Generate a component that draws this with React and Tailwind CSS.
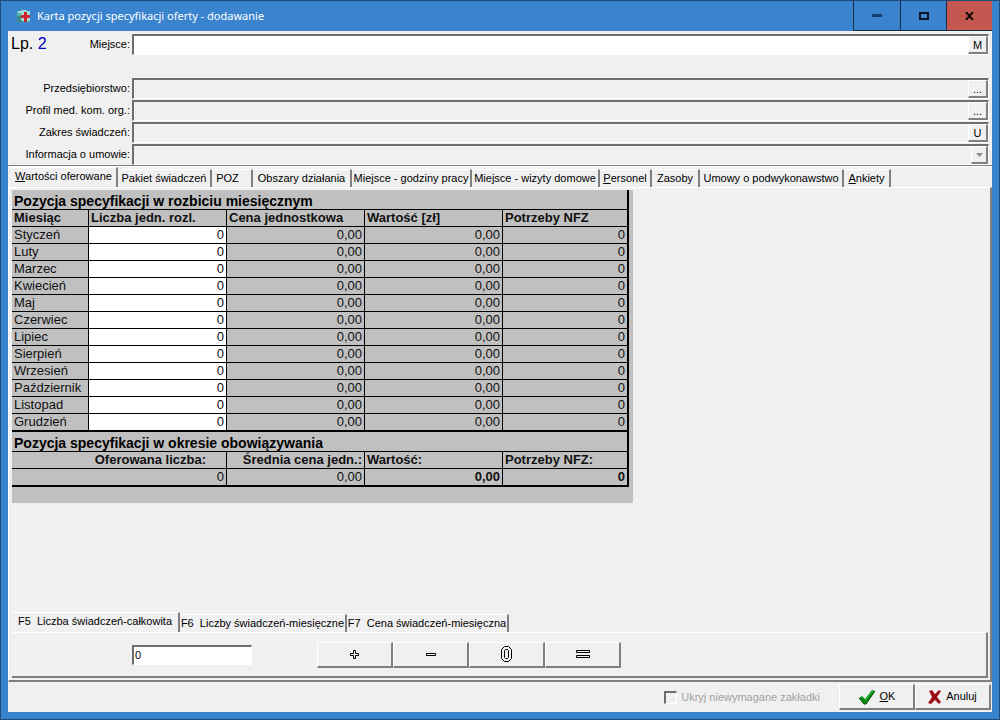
import { useState } from 'react';
import { clsx } from 'clsx';

const months = [
  'Styczeń',
  'Luty',
  'Marzec',
  'Kwiecień',
  'Maj',
  'Czerwiec',
  'Lipiec',
  'Sierpień',
  'Wrzesień',
  'Październik',
  'Listopad',
  'Grudzień',
];

const fields = [
  { id: 'company', label: 'Przedsiębiorstwo:', button: '...' },
  { id: 'profile', label: 'Profil med. kom. org.:', button: '...' },
  { id: 'scope', label: 'Zakres świadczeń:', button: 'U' },
];

const mainTabs = [
  { hotkey: 'W', label: 'artości oferowane', width: 'w-[107px]' },
  { label: 'Pakiet świadczeń', width: 'w-[94px]' },
  { label: 'POZ', width: 'w-[41px] pr-2' },
  { label: 'Obszary działania', width: 'w-[99px]' },
  { label: 'Miejsce - godziny pracy', width: 'w-[120px]' },
  { label: 'Miejsce - wizyty domowe', width: 'w-[128px]' },
  { hotkey: 'P', label: 'ersonel', width: 'w-[52px]' },
  { label: 'Zasoby', width: 'w-[48px]' },
  { label: 'Umowy o podwykonawstwo', width: 'w-[144px]' },
  { hotkey: 'A', label: 'nkiety', width: 'w-[47px]' },
];

const entryTabs = [
  { label: 'F5  Liczba świadczeń-całkowita', width: 'w-[168px]' },
  { label: 'F6  Liczby świadczeń-miesięczne', width: 'w-[167px]' },
  { label: 'F7  Cena świadczeń-miesięczna', width: 'w-[162px]' },
];

const raised = 'border-t border-l border-t-white border-l-white border-r-2 border-b-2 border-r-[#808080] border-b-[#808080] bg-[#f0f0f0]';
const sunken = 'border-t-2 border-l-2 border-t-[#6e6e6e] border-l-[#6e6e6e] border-r border-b border-r-white border-b-white';
const cell = 'h-[17px] border-b border-r border-black px-[2px] leading-4';
const sectionCell = 'h-5 border-r border-b border-black px-[2px] pt-[3px] text-left text-sm leading-4 text-black';

const Tabs = ({ tabs, active, onSelect }) => (
  <div role="tablist" className="flex items-end">
    {tabs.map((tab, i) => (
      <button
        key={tab.label}
        type="button"
        role="tab"
        aria-selected={i === active}
        onClick={() => onSelect(i)}
        className={clsx(
          'shrink-0 whitespace-pre border-t border-r-2 border-t-white border-r-[#808080] text-center',
          tab.width,
          i === active ? 'h-5 pb-1' : 'h-[18px]'
        )}
      >
        {tab.hotkey && <u>{tab.hotkey}</u>}
        {tab.label}
      </button>
    ))}
  </div>
);

const AppIcon = () => (
  <svg width="16" height="16" viewBox="0 0 16 16" aria-hidden="true">
    <path d="M1 3h3l1-1h5l1 1h3v11H1z" fill="#4fb0ae" />
    <path d="M2 3h3l1-1h4l1 1h3v2H2z" fill="#9adbd6" />
    <path d="M1 8h5v6H1z" fill="#3c8a8c" />
    <rect x="5" y="4" width="9" height="9" rx="2" fill="#a5ddd8" />
    <path d="M8 4h3v3h3v3h-3v4H8v-4H5V7h3z" fill="#d0232f" />
  </svg>
);

const CheckIcon = () => (
  <svg width="18" height="16" viewBox="0 0 18 16" aria-hidden="true">
    <path d="M1 9l3-2 3 3 7-9 3 1-9 13H6z" fill="#0a8a12" />
    <path d="M1 9l5 6h2l9-13" fill="none" stroke="#054b09" />
    <path d="M7 11l8-9" stroke="#35c43a" />
  </svg>
);

const CrossIcon = () => (
  <svg width="14" height="16" viewBox="0 0 14 16" aria-hidden="true">
    <path d="M1 2l3-1 3 4 4-4 2 1-4 6 4 5-2 2-4-4-4 4-3-1 4-6z" fill="#a8101b" />
    <path d="M3 2l8 11M11 3l-8 10" stroke="#7c0710" />
  </svg>
);

const TitleBar = () => (
  <header className="flex h-[30px] items-stretch pr-[7px] pl-[15px]">
    <div className="flex flex-1 items-center gap-[5px]">
      <AppIcon />
      <h1 className="font-['Noto_Sans',sans-serif] text-[11px] whitespace-nowrap text-white">
        Karta pozycji specyfikacji oferty - dodawanie
      </h1>
    </div>
    <button type="button" aria-label="Minimalizuj" className="flex w-[47px] items-center justify-center border-b border-l border-[#1d2c40]">
      <svg width="10" height="3" aria-hidden="true">
        <rect width="10" height="3" fill="#163f70" />
      </svg>
    </button>
    <button type="button" aria-label="Maksymalizuj" className="flex w-[46px] items-center justify-center border-b border-l border-[#1d2c40]">
      <svg width="10" height="8" aria-hidden="true">
        <rect x="1" y="1" width="8" height="6" fill="none" stroke="#0b1420" strokeWidth="2" />
      </svg>
    </button>
    <button type="button" aria-label="Zamknij" className="flex w-[46px] items-center justify-center border-b border-l border-[#1d2c40] bg-[#c4574f]">
      <svg width="10" height="8" viewBox="0 0 10 8" aria-hidden="true">
        <path d="M1 0l7 8M8 0L1 8" stroke="#100a0a" strokeWidth="2" />
      </svg>
    </button>
  </header>
);

const OfferForm = () => (
  <section className="flex flex-col gap-px px-[3px] pt-[3px]">
    <div className="mb-[22px] flex h-[21px]">
      <div className="flex-none text-base leading-5 text-black">
        Lp. <span className="text-[#0000c0]">2</span>
      </div>
      <label htmlFor="place" className="flex-1 pr-[2px] text-right leading-[21px]">
        Miejsce:
      </label>
      <div className={clsx('flex w-[857px] flex-none bg-white', sunken)}>
        <input id="place" className="min-w-0 flex-1 px-1 outline-none" />
        <button type="button" className={clsx('w-5', raised)}>
          M
        </button>
      </div>
    </div>
    {fields.map((field) => (
      <div key={field.id} className="flex h-[21px]">
        <label htmlFor={field.id} className="flex-1 pr-[2px] text-right leading-[21px]">
          {field.label}
        </label>
        <div className={clsx('flex w-[857px] flex-none', sunken)}>
          <input id={field.id} readOnly className="min-w-0 flex-1 px-1 outline-none" />
          <button type="button" className={clsx('w-5 leading-4', raised)}>
            {field.button}
          </button>
        </div>
      </div>
    ))}
    <div className="flex h-[21px]">
      <label htmlFor="contract" className="flex-1 pr-[2px] text-right leading-[21px]">
        Informacja o umowie:
      </label>
      <div className={clsx('relative flex w-[857px] flex-none', sunken)}>
        <select id="contract" disabled className="flex-1 appearance-none">
          <option></option>
        </select>
        <span className={clsx('pointer-events-none absolute inset-y-0 right-0 flex w-[17px] items-center justify-center', raised)}>
          <svg width="7" height="4" aria-hidden="true">
            <path d="M0 0h7L3.500 4z" fill="#8c8c8c" />
          </svg>
        </span>
      </div>
    </div>
  </section>
);

const MonthTable = () => (
  <div className="w-[621px] bg-[#c0c0c0] pb-4 text-[13px] text-[#101010]">
    <table className="w-[617px] table-fixed border-separate border-spacing-0 border-r border-black">
      <colgroup>
        <col className="w-[77px]" />
        <col className="w-[138px]" />
        <col className="w-[138px]" />
        <col className="w-[138px]" />
        <col />
      </colgroup>
      <thead className="text-left">
        <tr>
          <th colSpan={5} className={sectionCell}>
            Pozycja specyfikacji w rozbiciu miesięcznym
          </th>
        </tr>
        <tr>
          <th className={cell}>Miesiąc</th>
          <th className={cell}>Liczba jedn. rozl.</th>
          <th className={cell}>Cena jednostkowa</th>
          <th className={cell}>Wartość [zł]</th>
          <th className={cell}>Potrzeby NFZ</th>
        </tr>
      </thead>
      <tbody className="text-right [&>tr:last-child>*]:border-b-2">
        {months.map((month) => (
          <tr key={month}>
            <th scope="row" className={clsx(cell, 'text-left font-normal')}>
              {month}
            </th>
            <td className={clsx(cell, 'bg-white')}>
              <input aria-label={month} defaultValue="0" className="block h-4 w-full text-right outline-none" />
            </td>
            <td className={cell}>0,00</td>
            <td className={cell}>0,00</td>
            <td className={cell}>0</td>
          </tr>
        ))}
      </tbody>
      <tfoot className="text-right [&>tr:last-child>*]:border-b-2">
        <tr>
          <th colSpan={5} className={sectionCell}>
            Pozycja specyfikacji w okresie obowiązywania
          </th>
        </tr>
        <tr>
          <th colSpan={2} className={clsx(cell, 'pr-5')}>
            Oferowana liczba:
          </th>
          <th className={cell}>Średnia cena jedn.:</th>
          <th className={clsx(cell, 'text-left')}>Wartość:</th>
          <th className={clsx(cell, 'text-left')}>Potrzeby NFZ:</th>
        </tr>
        <tr>
          <td colSpan={2} className={cell}>0</td>
          <td className={cell}>0,00</td>
          <td className={clsx(cell, 'font-bold')}>0,00</td>
          <td className={clsx(cell, 'font-bold')}>0</td>
        </tr>
      </tfoot>
    </table>
  </div>
);

// Outlined glyphs on the calculator buttons
const operations = [
  { name: 'Dodaj', path: 'M3.500 .5h2v3h3v2h-3v3h-2v-3h-3v-2h3z', box: '0 0 9 9', w: 9, h: 9 },
  { name: 'Odejmij', path: 'M.5 .5h9v2h-9z', box: '0 0 10 3', w: 10, h: 3 },
  { name: 'Wyzeruj', path: 'M3.500 .5h4l3 3v9l-3 3h-4l-3-3v-9zM4.500 3.500h2l1 1v7l-1 1h-2l-1-1v-7z', box: '0 0 11 16', w: 11, h: 16 },
  { name: 'Ustaw', path: 'M.5 .5h13v2h-13zM.5 5.500h13v2h-13z', box: '0 0 14 8', w: 14, h: 8 },
];

const EntryPanel = () => {
  const [tab, setTab] = useState(0);
  const [amount, setAmount] = useState('0');

  return (
    <div className="mr-[2px]">
      <Tabs tabs={entryTabs} active={tab} onSelect={setTab} />
      <div className="flex h-[46px] items-center border-t border-r-2 border-b-2 border-t-white border-r-[#808080] border-b-[#808080] pl-[120px]">
        <input
          aria-label="Liczba świadczeń"
          value={amount}
          onChange={(e) => setAmount(e.target.value)}
          className={clsx('mr-[65px] h-5 w-[120px] bg-white px-px outline-none', sunken)}
        />
        {operations.map((op) => (
          <button key={op.name} type="button" aria-label={op.name} className={clsx('flex h-[26px] w-[76px] items-center justify-center', raised)}>
            <svg width={op.w} height={op.h} viewBox={op.box} aria-hidden="true">
              <path d={op.path} fill="none" stroke="#000" />
            </svg>
          </button>
        ))}
      </div>
    </div>
  );
};

const App = () => {
  const [tab, setTab] = useState(0);

  return (
    <div className="flex min-h-screen flex-col border border-[#1f4a7c] bg-[#3a84cf] font-['Liberation_Sans',Arial,sans-serif] text-[11px] text-black">
      <TitleBar />
      <main className="mx-[7px] mb-[7px] flex flex-1 flex-col bg-[#f0f0f0]">
        <OfferForm />
        <div className="flex flex-1 flex-col border-t border-[#808080]">
          <div className="flex flex-1 flex-col border-t border-white">
            <div className="pl-[3px]">
              <Tabs tabs={mainTabs} active={tab} onSelect={setTab} />
            </div>
            <div className="flex flex-1 flex-col justify-between border-t border-r-2 border-b-2 border-l border-t-white border-l-white border-r-[#808080] border-b-[#808080] pt-[2px] pb-[2px] pl-[3px]">
              <MonthTable />
              <EntryPanel />
            </div>
          </div>
        </div>
        <footer className="flex h-[30px] items-center justify-end pr-px">
          <label className="mr-[19px] flex items-center gap-1 text-[#a0a0a0]">
            <input type="checkbox" disabled className={clsx('h-[13px] w-[13px] appearance-none', sunken)} />
            Ukryj niewymagane zakładki
          </label>
          <button type="button" className={clsx('flex h-[26px] w-[76px] items-center justify-center gap-1', raised)}>
            <CheckIcon />
            <span>
              <u>O</u>K
            </span>
          </button>
          <button type="button" className={clsx('flex h-[26px] w-[76px] items-center justify-center gap-1', raised)}>
            <CrossIcon />
            Anuluj
          </button>
        </footer>
      </main>
    </div>
  );
};

export default App;
